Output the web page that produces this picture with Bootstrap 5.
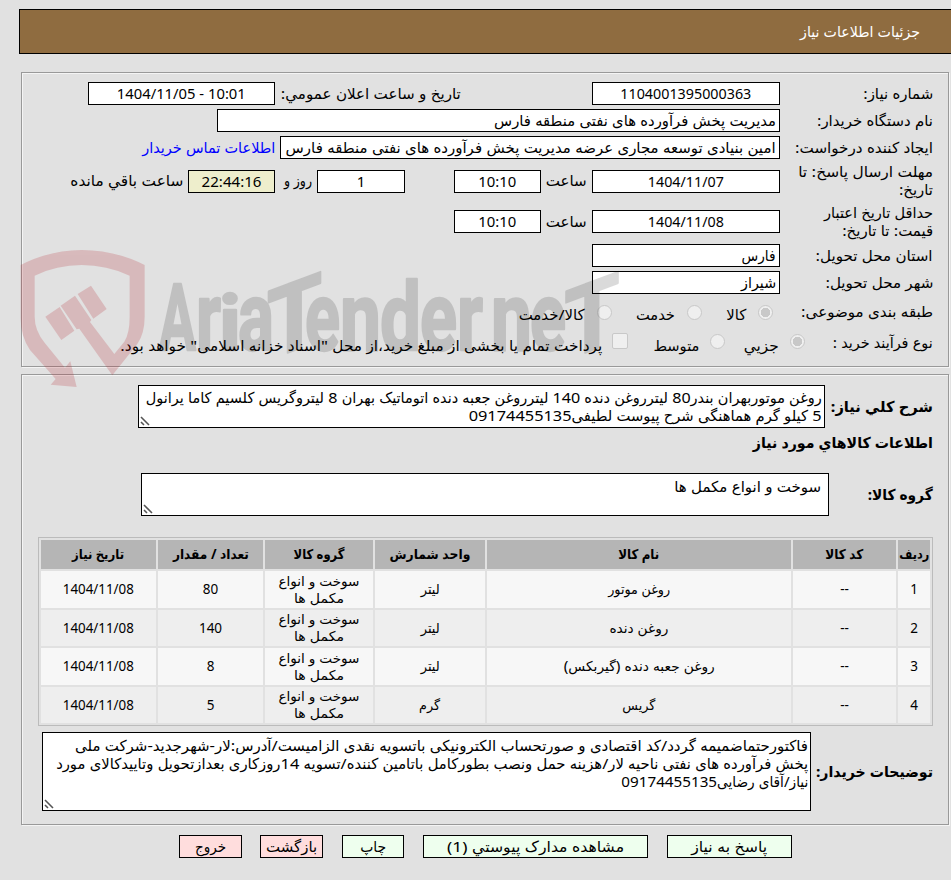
<!DOCTYPE html>
<html lang="fa" dir="rtl">
<head>
<meta charset="utf-8">
<title>جزئیات اطلاعات نیاز</title>
<link href="https://cdn.jsdelivr.net/npm/bootstrap@5.3.0/dist/css/bootstrap.min.css" rel="stylesheet">
<style>
body{background:#e1e1e1;color:#000;font:15px/18px "Noto Sans","DejaVu Sans Condensed","DejaVu Sans",sans-serif;width:951px;height:880px;overflow:hidden}
.titlebar{height:45px;margin:9px 0 0 19px;background:#8f6c40;border:1px solid #000;border-right:0;color:#fff;padding-right:31px}
.panel{width:928px;margin-left:21px;margin-right:2px;border:1px solid #999;box-shadow:inset 1px 1px 0 #f4f4f4,1px 1px 0 #f4f4f4;padding-right:15px}
.panel-a{height:295px;margin-top:18px;padding-top:7px}
.panel-b{height:451px;margin-top:7px}
.frow{height:27px}
.frow-tall{height:40px}
.frow-mid{height:41px}
.orow1{margin-top:1px}
.orow2{margin-top:4px}
.cap{width:153px;flex:none}
.cap-b{flex:none;font-weight:700}
.cap-g{width:104px}
.box{background:#fff;border:1px solid #000;height:23px;flex:none;padding:0 3px;line-height:22px;white-space:nowrap}
.box-n{line-height:20px}
.w188{width:188px}.w187{width:187px}.w563{width:563px}.w500{width:500px}.w87{width:87px}.w88{width:88px}
.timer{background:#eeeecc}
.fit{display:inline-block;white-space:nowrap;transform-origin:right center;translate:0 -1px}
.goods .fit{translate:none}
.cap .fit,.line .fit{vertical-align:top;height:18px}
.g5{margin-right:5px}.g6{margin-right:6px}.g7{margin-right:7px}.g9{margin-right:9px}.g49{margin-right:49px}.g131{margin-right:131px}
.link{color:#00f;text-decoration:none}
.opt{width:15px;height:15px;border:1px solid #c8c8c8;border-radius:50%;background:#efefef;flex:none;margin-bottom:4px}
.opt.on{background:radial-gradient(circle,#c8c8c8 0 4.5px,#efefef 5px)}
.orow2 .opt{margin-bottom:6px}
.opt.sq{border-radius:2px;width:16px;height:16px}
.orow1 .cap,.orow2 .cap{position:relative;top:1px}
.o1{margin-right:7px}.o2{margin-right:24px}.o3{margin-right:24px}.o4{margin-right:-25px}.o5{margin-right:25px}.o6{margin-right:19px}
.o1r{margin-right:12px}.orow2 .o1r{margin-right:11px}.o2r{margin-right:10px}
.area{position:relative;background:#fff;border:1px solid #000;flex:none;padding:3px 2px 0}
.area svg{position:absolute;left:1px;bottom:1px}
.a1{width:687px;height:43px}.a2{width:688px;height:43px;padding-top:4px;padding-right:7px}.a3{width:769px;height:79px;padding-top:4px}
.line{height:18px}
.r1{height:43px;margin-top:10px}.r2{height:30px}.r3{height:43px;margin-top:15px}.r4{height:79px;margin-top:6px}
.goods{width:895px;margin-top:21px;border:1px solid #bbb;border-collapse:separate;border-spacing:2px;table-layout:fixed;font-size:13.5px;line-height:17px;text-align:center;background:#e1e1e1}
.goods td,.goods th{padding:0;vertical-align:middle;white-space:nowrap}
.goods .fit{vertical-align:top;height:17px}
.goods th{background:#b5b5b5;height:29px;font-weight:700;text-align:center}
.goods td{background:#eee;height:36.5px;padding-top:1px}
.goods tr:nth-child(odd) td{background:#f7f7f7}
.acts{margin-top:10px;padding-right:159px}
.act{height:23px;border:1px solid #000;border-radius:0;background:#efe;color:#000;padding:0;font-size:15px;line-height:22px}
.act.red{background:#fdd}
.b1{width:125px}.b2{width:225px;margin-right:19px}.b3{width:62px;margin-right:19px}.b4{width:63px;margin-right:19px}.b5{width:63px;margin-right:18px}
.stamp{position:absolute;left:0;top:240px;pointer-events:none}
</style>
<script src="https://cdn.jsdelivr.net/npm/bootstrap@5.3.0/dist/js/bootstrap.bundle.min.js"></script>
</head>
<body class="position-relative">
<header class="titlebar d-flex align-items-center"><span class="fit" data-w="120">جزئیات اطلاعات نیاز</span></header>

<section class="panel panel-a">
  <div class="frow d-flex align-items-center">
    <div class="cap"><span class="fit" data-w="70">شماره نیاز:</span></div>
    <div class="box w188 text-center"><span class="fit" data-w="131">1104001395000363</span></div>
    <span class="fit g131" data-w="180">تاریخ و ساعت اعلان عمومي:</span>
    <div class="box w187 text-center g6" ><span class="fit" data-w="129" dir="ltr">1404/11/05 - 10:01</span></div>
  </div>
  <div class="frow d-flex align-items-center">
    <div class="cap"><span class="fit" data-w="116">نام دستگاه خریدار:</span></div>
    <div class="box w563"><span class="fit" data-w="282">مدیریت پخش فرآورده های نفتی منطقه فارس</span></div>
  </div>
  <div class="frow d-flex align-items-center">
    <div class="cap"><span class="fit" data-w="138">ایجاد کننده درخواست:</span></div>
    <div class="box w500"><span class="fit" data-w="490">امین بنیادی توسعه مجاری عرضه مدیریت پخش فرآورده های نفتی منطقه فارس</span></div>
    <a class="link g5" href="#"><span class="fit" data-w="133">اطلاعات تماس خریدار</span></a>
  </div>
  <div class="frow-tall d-flex align-items-center">
    <div class="cap"><span class="fit" data-w="135">مهلت ارسال پاسخ: تا</span><br><span class="fit" data-w="34">تاریخ:</span></div>
    <div class="box w188 text-center"><span class="fit" data-w="76">1404/11/07</span></div>
    <span class="fit g5" data-w="41">ساعت</span>
    <div class="box w87 text-center g5"><span class="fit" data-w="38">10:10</span></div>
    <div class="box box-n w88 text-center g49">1</div>
    <span class="fit g5" data-w="28">روز و</span>
    <div class="box w87 timer text-center g9"><span class="fit" data-w="60">22:44:16</span></div>
    <span class="fit g5" data-w="113">ساعت باقي مانده</span>
  </div>
  <div class="frow-mid d-flex align-items-center">
    <div class="cap"><span class="fit" data-w="109">حداقل تاریخ اعتبار</span><br><span class="fit" data-w="91">قیمت: تا تاریخ:</span></div>
    <div class="box w188 text-center"><span class="fit" data-w="76">1404/11/08</span></div>
    <span class="fit g5" data-w="41">ساعت</span>
    <div class="box w87 text-center g5"><span class="fit" data-w="38">10:10</span></div>
  </div>
  <div class="frow d-flex align-items-center">
    <div class="cap"><span class="fit" data-w="117">استان محل تحویل:</span></div>
    <div class="box w188"><span class="fit" data-w="34">فارس</span></div>
  </div>
  <div class="frow d-flex align-items-center">
    <div class="cap"><span class="fit" data-w="108">شهر محل تحویل:</span></div>
    <div class="box w188"><span class="fit" data-w="35">شیراز</span></div>
  </div>
  <div class="frow orow1 d-flex align-items-end">
    <div class="cap"><span class="fit mb-1" data-w="132">طبقه بندی موضوعی:</span></div>
    <span class="opt on o1"></span><span class="fit o1r" data-w="20">کالا</span>
    <span class="opt o2"></span><span class="fit o1r" data-w="39">خدمت</span>
    <span class="opt o3"></span><span class="fit o1r" data-w="66">کالا/خدمت</span>
  </div>
  <div class="frow orow2 d-flex align-items-end">
    <div class="cap"><span class="fit mb-1" data-w="100">نوع فرآیند خرید :</span></div>
    <span class="opt on o4"></span><span class="fit o1r" data-w="35">جزيي</span>
    <span class="opt o6"></span><span class="fit o1r" data-w="46">متوسط</span>
    <span class="opt sq o5"></span><span class="fit o2r" data-w="482">پرداخت تمام یا بخشی از مبلغ خرید،از محل "اسناد خزانه اسلامی" خواهد بود.</span>
  </div>
</section>

<section class="panel panel-b">
  <div class="r1 d-flex align-items-center">
    <div class="cap-b"><span class="fit" data-w="102">شرح كلي نیاز:</span></div>
    <div class="area a1 g6">
      <div class="line"><span class="fit" data-w="676">روغن موتوربهران بندر80 لیترروغن دنده 140 لیترروغن جعبه دنده اتوماتیک بهران 8 لیتروگریس کلسیم کاما یرانول</span></div>
      <div class="line"><span class="fit" data-w="353">5 کیلو گرم هماهنگی شرح پیوست لطیفی09174455135</span></div>
      <svg width="10" height="10"><path d="M1 1l8 8M1 6l3 3" stroke="#555" stroke-width="1.6"/></svg>
    </div>
  </div>
  <div class="r2 cap-b d-flex align-items-center"><span class="fit" data-w="180">اطلاعات کالاهاي مورد نیاز</span></div>
  <div class="r3 d-flex align-items-center">
    <div class="cap-b cap-g"><span class="fit" data-w="65">گروه كالا:</span></div>
    <div class="area a2">
      <div class="line"><span class="fit" data-w="147">سوخت و انواع مکمل ها</span></div>
      <svg width="10" height="10"><path d="M1 1l8 8M1 6l3 3" stroke="#555" stroke-width="1.6"/></svg>
    </div>
  </div>
  <table class="goods">
    <colgroup><col style="width:32px"><col style="width:103px"><col style="width:304px"><col style="width:110px"><col style="width:108px"><col style="width:105px"><col></colgroup>
    <thead><tr><th><span class="fit" data-w="30">ردیف</span></th><th><span class="fit" data-w="38">کد کالا</span></th><th><span class="fit" data-w="41">نام کالا</span></th><th><span class="fit" data-w="81">واحد شمارش</span></th><th><span class="fit" data-w="51">گروه کالا</span></th><th><span class="fit" data-w="76">تعداد / مقدار</span></th><th><span class="fit" data-w="52">تاریخ نیاز</span></th></tr></thead>
    <tbody>
    <tr><td>1</td><td>--</td><td><span class="fit" data-w="62">روغن موتور</span></td><td><span class="fit" data-w="19">لیتر</span></td><td><span class="fit" data-w="81">سوخت و انواع</span><br><span class="fit" data-w="50">مکمل ها</span></td><td>80</td><td><span class="fit" data-w="71">1404/11/08</span></td></tr>
    <tr><td>2</td><td>--</td><td><span class="fit" data-w="59">روغن دنده</span></td><td><span class="fit" data-w="19">لیتر</span></td><td><span class="fit" data-w="81">سوخت و انواع</span><br><span class="fit" data-w="50">مکمل ها</span></td><td>140</td><td><span class="fit" data-w="71">1404/11/08</span></td></tr>
    <tr><td>3</td><td>--</td><td><span class="fit" data-w="151">روغن جعبه دنده (گیربکس)</span></td><td><span class="fit" data-w="19">لیتر</span></td><td><span class="fit" data-w="81">سوخت و انواع</span><br><span class="fit" data-w="50">مکمل ها</span></td><td>8</td><td><span class="fit" data-w="71">1404/11/08</span></td></tr>
    <tr><td>4</td><td>--</td><td><span class="fit" data-w="33">گریس</span></td><td><span class="fit" data-w="21">گرم</span></td><td><span class="fit" data-w="81">سوخت و انواع</span><br><span class="fit" data-w="50">مکمل ها</span></td><td>5</td><td><span class="fit" data-w="71">1404/11/08</span></td></tr>
    </tbody>
  </table>
  <div class="r4 d-flex align-items-center">
    <div class="cap-b"><span class="fit" data-w="117">توضیحات خریدار:</span></div>
    <div class="area a3 g5">
      <div class="line"><span class="fit" data-w="733">فاکتورحتماضمیمه گردد/کد اقتصادی و صورتحساب الکترونیکی باتسویه نقدی الزامیست/آدرس:لار-شهرجدید-شرکت ملی</span></div>
      <div class="line"><span class="fit" data-w="752">پخش فرآورده های نفتی ناحیه لار/هزینه حمل ونصب بطورکامل باتامین کننده/تسویه 14روزکاری بعدازتحویل وتاییدکالای مورد</span></div>
      <div class="line"><span class="fit" data-w="187">نیاز/آقای رضایی09174455135</span></div>
      <svg width="10" height="10"><path d="M1 1l8 8M1 6l3 3" stroke="#555" stroke-width="1.6"/></svg>
    </div>
  </div>
</section>

<div class="acts d-flex">
  <button class="btn act b1"><span class="fit" data-w="76">پاسخ به نیاز</span></button>
  <button class="btn act b2"><span class="fit" data-w="177">مشاهده مدارک پیوستي (1)</span></button>
  <button class="btn act b3"><span class="fit" data-w="26">چاپ</span></button>
  <button class="btn act red b4"><span class="fit" data-w="51">بازگشت</span></button>
  <button class="btn act red b5"><span class="fit" data-w="31">خروج</span></button>
</div>

<svg class="stamp" width="640" height="150" viewBox="0 240 640 150" direction="ltr">
  <g fill="#b41e28" opacity=".2" transform="translate(0 240) scale(.3333)">
    <path d="M62 75Q150 30 245 30Q345 30 434 75V230Q434 280 412 312L337 406L238 266L230 268L182 197L225 167L274 240L270 246L343 342L373 305Q389 280 389 230V107Q320 75 245 75Q170 75 104 107V230Q104 272 135 310L195 383L211 364L230 441L152 434L167 417L90 330Q62 290 62 235Z"/>
    <path d="M136 230L179 201L223 272L184 300ZM233 162L273 137L320 207L280 236Z"/>
  </g>
  <g opacity=".14" fill="#000" stroke="#000" stroke-width="2.4" stroke-linejoin="round" font-family="Roboto,sans-serif" font-weight="700" font-size="97">
    <text x="159" y="350" font-size="93" textLength="37" lengthAdjust="spacingAndGlyphs">A</text>
    <text x="196" y="350" textLength="25" lengthAdjust="spacingAndGlyphs">r</text>
    <text x="219" y="350" font-size="76" textLength="22" lengthAdjust="spacingAndGlyphs">i</text>
    <text x="238" y="350" textLength="36" lengthAdjust="spacingAndGlyphs">a</text>
    <g transform="translate(294.5 350) skewY(-20.5)"><text text-anchor="middle" font-size="96" textLength="55" lengthAdjust="spacingAndGlyphs">T</text></g>
    <text x="305" y="350" textLength="35" lengthAdjust="spacingAndGlyphs">e</text>
    <text x="340" y="350" textLength="41" lengthAdjust="spacingAndGlyphs">n</text>
    <text x="380" y="350" font-size="94" textLength="41" lengthAdjust="spacingAndGlyphs">d</text>
    <text x="420" y="350" textLength="37" lengthAdjust="spacingAndGlyphs">e</text>
    <text x="457" y="350" textLength="26" lengthAdjust="spacingAndGlyphs">r</text>
    <text x="491" y="350" textLength="41" lengthAdjust="spacingAndGlyphs">n</text>
    <text x="530" y="350" textLength="36" lengthAdjust="spacingAndGlyphs">e</text>
    <g transform="translate(592 350) skewY(-20.5)"><text text-anchor="middle" font-size="96" textLength="55" lengthAdjust="spacingAndGlyphs">T</text></g>
  </g>
</svg>
<script>
document.querySelectorAll('.fit').forEach(function(e){
  var n=e.getBoundingClientRect().width,w=+e.dataset.w;
  e.style.transform='scaleX('+w/n+')';
  e.style.marginLeft=(w-n)+'px';
});
</script>
</body>
</html>
